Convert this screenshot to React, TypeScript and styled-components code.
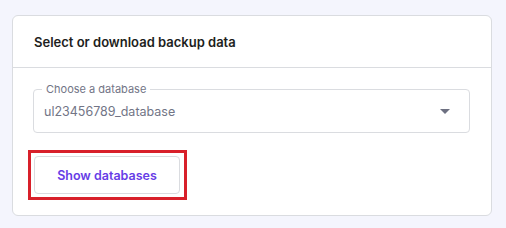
import styled, { createGlobalStyle } from 'styled-components';

const GlobalStyle = createGlobalStyle`
	body {
		margin: 0;
		background: #f4f5fd;
		font-family: Inter, 'Noto Sans', sans-serif;
	}
`;

const Page = styled.div`
	padding: 15px 14px 14px 12px;
`;

const Card = styled.section`
	background: #ffffff;
	border: 1px solid #dadce0;
	border-radius: 6px;
`;

const Header = styled.div`
	display: flex;
	align-items: center;
	height: 51px;
	padding: 0 21px;
	border-bottom: 1px solid #dadce0;
`;

const Title = styled.h3`
	margin: 0;
	font-size: 13px;
	font-weight: 600;
	color: #1d1e20;
`;

const Body = styled.div`
	display: flex;
	flex-direction: column;
	align-items: flex-start;
	gap: 23px;
	padding: 21px 21px 21px 20px;
`;

const Select = styled.div`
	position: relative;
	box-sizing: border-box;
	width: 100%;
	height: 44px;
	padding: 0 10px;
	border: 1px solid #dadce0;
	border-radius: 4px;
	display: flex;
	align-items: center;
	justify-content: space-between;
`;

const Label = styled.span`
	position: absolute;
	top: -8px;
	left: 8px;
	padding: 0 4px;
	background: #ffffff;
	font-size: 11px;
	line-height: 14px;
	color: #727586;
`;

const Value = styled.span`
	font-size: 12.5px;
	color: #727586;
`;

const Caret = styled.svg`
	width: 10px;
	height: 5px;
	margin-right: 9px;
`;

const Highlight = styled.div`
	position: relative;
	margin-left: 1px;

	&::after {
		content: '';
		position: absolute;
		inset: -6px -7px -6px -6px;
		border: 3px solid #d8202a;
		pointer-events: none;
	}
`;

const Button = styled.button`
	display: block;
	width: 146px;
	height: 38px;
	background: #ffffff;
	border: 1px solid #dadce0;
	border-radius: 4px;
	font-family: Inter, 'Noto Sans', sans-serif;
	font-size: 12.5px;
	font-weight: 600;
	color: #673de6;
	cursor: pointer;
`;

const App = () => {
	return (
		<Page>
			<GlobalStyle />
			<Card>
				<Header>
					<Title>Select or download backup data</Title>
				</Header>
				<Body>
					<Select>
						<Label>Choose a database</Label>
						<Value>ul23456789_database</Value>
						<Caret viewBox="0 0 10 5">
							<path d="M0 0 L10 0 L5 5 Z" fill="#6d7081" />
						</Caret>
					</Select>
					<Highlight>
						<Button>Show databases</Button>
					</Highlight>
				</Body>
			</Card>
		</Page>
	);
};

export default App;
